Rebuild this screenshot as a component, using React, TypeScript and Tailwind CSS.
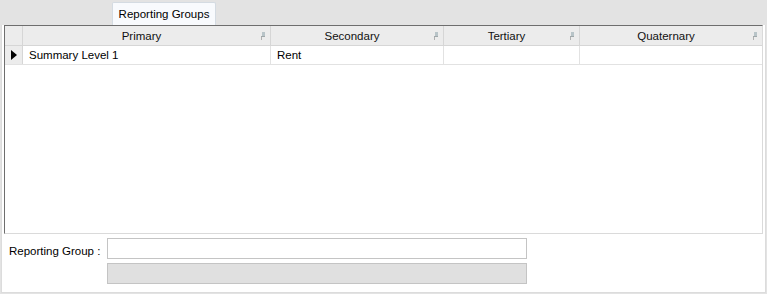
import React from 'react';

const columns = [
  { title: 'Primary', width: 'w-[248px]' },
  { title: 'Secondary', width: 'w-[173px]' },
  { title: 'Tertiary', width: 'w-[136px]' },
  { title: 'Quaternary', width: 'flex-1' },
];

const PinIcon: React.FC = () => (
  <svg width="6" height="8" viewBox="0 0 6 8" className="absolute right-[4px] top-[6px]">
    <rect x="2" y="0" width="3" height="4" fill="#b8c4c8" />
    <rect x="1" y="4" width="4" height="1" fill="#a0a8aa" />
    <rect x="1" y="5" width="1" height="3" fill="#b0b0b0" />
  </svg>
);

const App: React.FC = () => {
  const row = ['Summary Level 1', 'Rent', '', ''];

  return (
    <div className="w-[767px] h-[294px] bg-[#e3e3e3] flex flex-col text-[11.5px] text-black font-['Liberation_Sans',Arial,sans-serif]">
      {/* tab strip */}
      <div className="h-[25px] flex items-end pl-[112px]">
        <div className="h-[23px] w-[104px] bg-[#f8fafd] border border-b-0 border-[#d4dbe2] rounded-t-[2px] flex items-center justify-center pt-[1px]">
          Reporting Groups
        </div>
      </div>

      {/* tab page */}
      <div className="flex-1 bg-white border-x border-b border-[#dcdcdc] ml-[1px] mr-[1px] mb-[1px] flex flex-col">
        {/* grid */}
        <div className="ml-[2px] mr-[2px] h-[209px] border-t border-l border-[#6e6e6e] border-r border-r-[#dadada] border-b border-b-[#dadada] flex flex-col">
          <div className="h-[20px] bg-[#ececec] flex border-b border-[#d6d6d6]">
            <div className="w-[18px] border-r border-[#d6d6d6]" />
            {columns.map((c) => (
              <div
                key={c.title}
                className={`${c.width} relative border-r border-[#d6d6d6] last:border-r-0 flex items-center justify-center pr-[10px] pt-[2px] text-[#111]`}
              >
                {c.title}
                <PinIcon />
              </div>
            ))}
          </div>
          <div className="h-[19px] flex border-b border-[#e2e2e2]">
            <div className="w-[18px] bg-[#ececec] border-r border-[#d6d6d6] flex items-center justify-center">
              <svg width="6" height="10" viewBox="0 0 6 10">
                <polygon points="0,0 6,5 0,10" fill="#000" />
              </svg>
            </div>
            {columns.map((c, i) => (
              <div
                key={c.title}
                className={`${c.width} border-r border-[#e2e2e2] last:border-r-0 flex items-center pl-[6px] pt-[2px]`}
              >
                {row[i]}
              </div>
            ))}
          </div>
          <div className="flex-1" />
        </div>

        {/* form */}
        <div className="flex pt-[4px] pl-[7px]">
          <div className="w-[98px] pt-[5px]">Reporting Group :</div>
          <div className="flex flex-col gap-[4px]">
            <div className="w-[420px] h-[21px] border border-[#c4c4c4] bg-white" />
            <div className="w-[420px] h-[21px] border border-[#c4c4c4] bg-[#e0e0e0]" />
          </div>
        </div>
      </div>
    </div>
  );
};

export default App;
